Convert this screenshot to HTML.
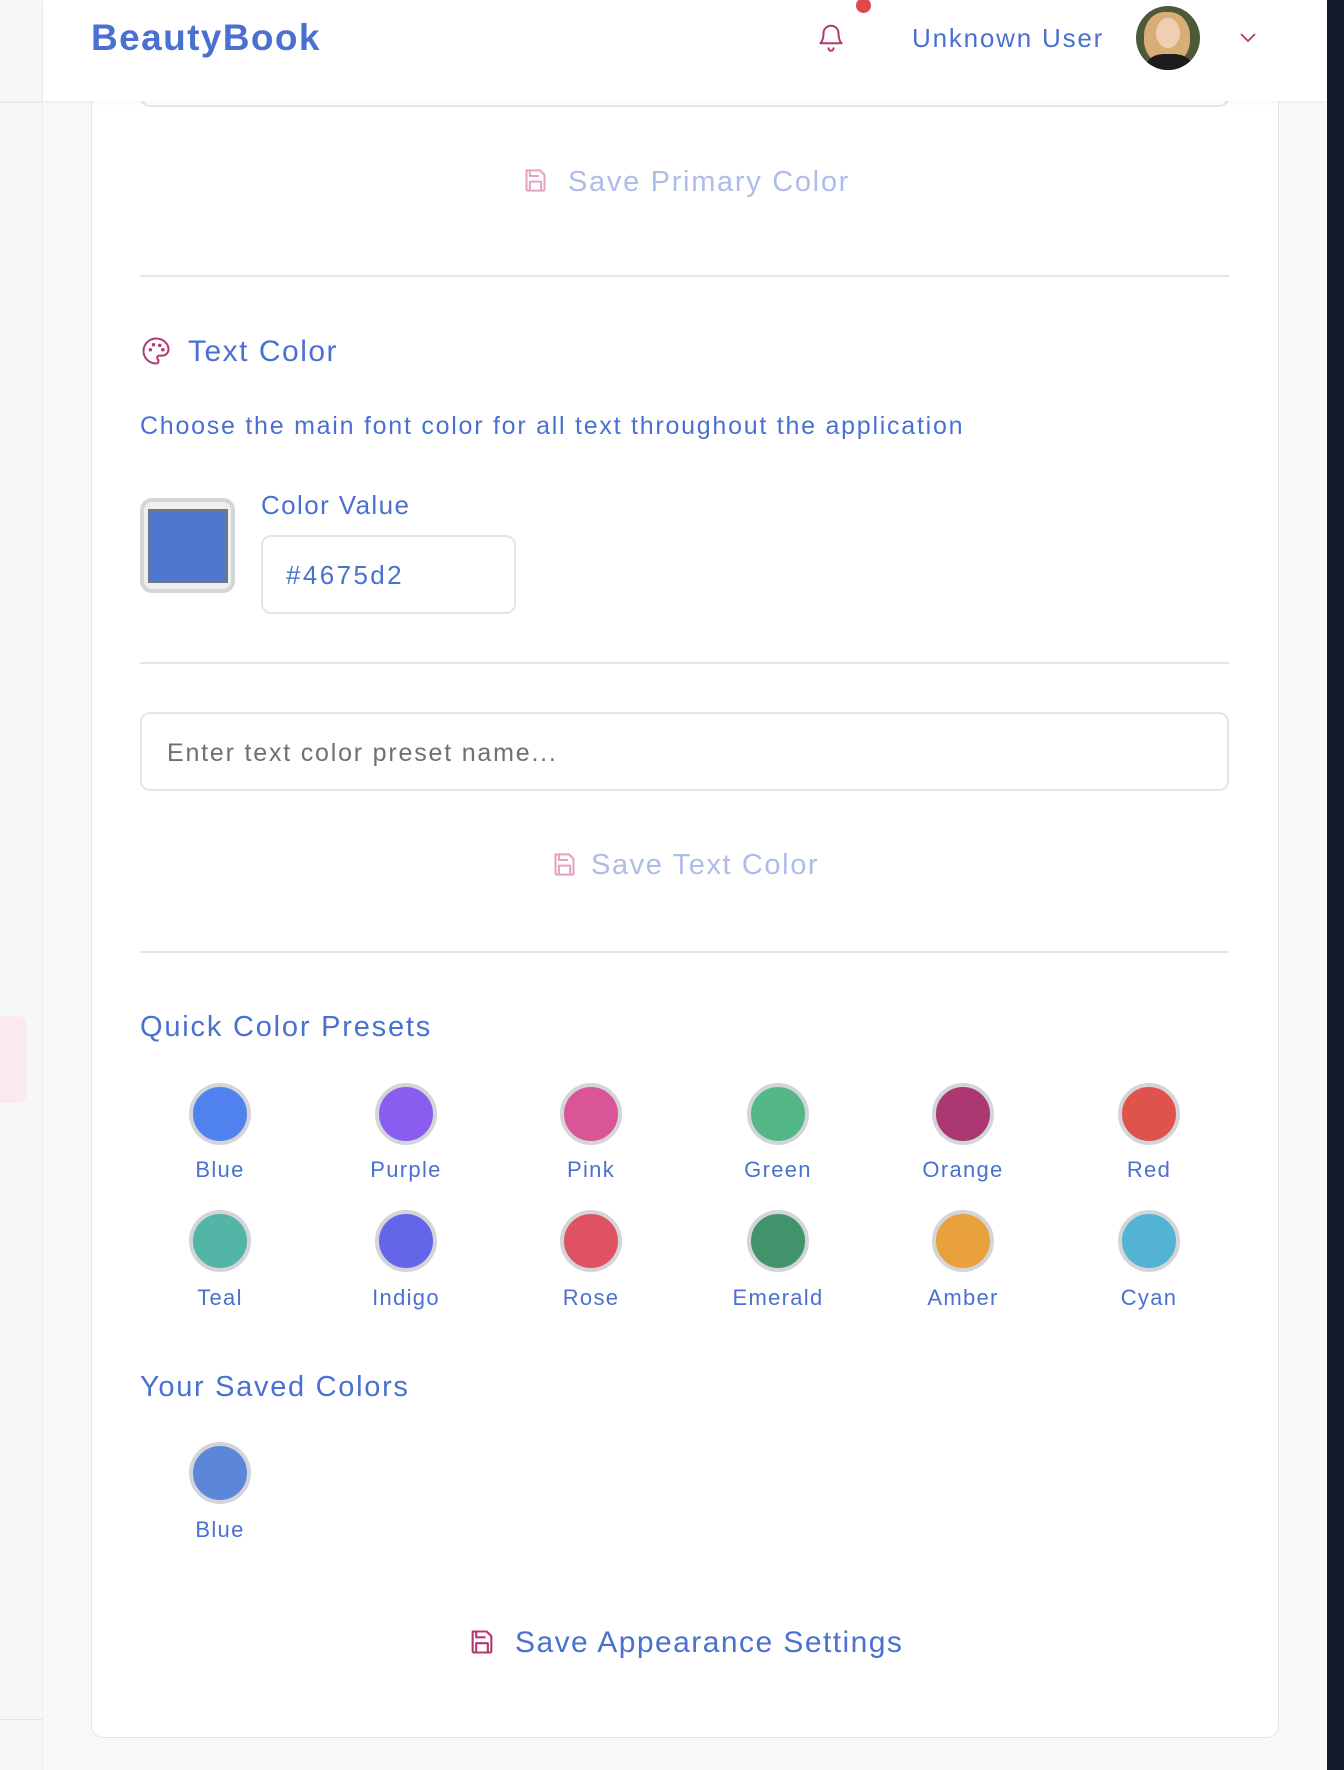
<!DOCTYPE html>
<html><head><meta charset="utf-8"><style>
*{box-sizing:border-box;margin:0;padding:0}
body{width:1344px;height:1770px;background:#f7f8fa;font-family:"Liberation Sans",sans-serif;color:#4a70d0;position:relative;overflow:hidden}
.abs{position:absolute}
.side{left:0;top:0;width:43px;height:1770px;background:#f6f7f9;border-right:1px solid #eceef1}
.dark{left:1327px;top:0;width:17px;height:1770px;background:#131a2a}
.card{left:91px;top:60px;width:1188px;height:1678px;background:#fff;border:1px solid #e3e5e8;border-radius:12px}
.hdr{left:43px;top:0;width:1284px;height:101px;background:#fff;box-shadow:0 2px 4px rgba(0,0,0,.04)}
.hr{left:140px;width:1089px;height:2px;background:#e4e5e7}
.t{white-space:nowrap}
.circ{width:62px;height:62px;border-radius:50%;border:4px solid #d3d5d9}
.lbl{font-size:22px;width:180px;text-align:center;color:#4a70d0;letter-spacing:1.3px}
</style></head><body>
<div class="abs side"></div>
<div class="abs" style="left:0;top:1016px;width:26px;height:87px;background:#fbe9f1;border-radius:0 8px 8px 0"></div>
<div class="abs" style="left:0;top:1719px;width:43px;height:1px;background:#e4e5e7"></div>
<div class="abs dark"></div>
<div class="abs card"></div>
<div class="abs" style="left:140px;top:40px;width:1089px;height:67px;border:2px solid #e4e5e7;border-radius:10px"></div>
<div class="abs hdr"></div>
<div class="abs" style="left:0;top:101px;width:43px;height:2px;background:#e9eaec"></div>
<div class="abs t" style="left:91px;top:17px;font-size:37px;font-weight:bold;color:#4a70d0;letter-spacing:1.4px">BeautyBook</div>
<svg class="abs" style="left:816px;top:20px" width="30" height="34" viewBox="0 0 24 26" fill="none" stroke="#b03a70" stroke-width="1.6" stroke-linecap="round" stroke-linejoin="round"><path d="M6 10a6 6 0 0 1 12 0c0 6 2.5 8 2.5 8h-17S6 16 6 10"/><path d="M10 22a2 2 0 0 0 4 0"/></svg>
<div class="abs" style="left:856px;top:-2px;width:15px;height:15px;border-radius:50%;background:#e0484a"></div>
<div class="abs t" style="left:912px;top:23px;font-size:26px;letter-spacing:1.8px">Unknown User</div>
<div class="abs" style="left:1136px;top:6px;width:64px;height:64px;border-radius:50%;overflow:hidden;background:#4c5a3a">
<div class="abs" style="left:8px;top:6px;width:46px;height:52px;border-radius:45%;background:#d8ad78"></div>
<div class="abs" style="left:20px;top:12px;width:24px;height:30px;border-radius:50%;background:#efcfb2"></div>
<div class="abs" style="left:10px;top:48px;width:46px;height:30px;border-radius:40%;background:#1c1c1c"></div>
</div>
<svg class="abs" style="left:1239px;top:31px" width="18" height="12" viewBox="0 0 18 12" fill="none" stroke="#b03a70" stroke-width="1.8"><path d="M2 3l7 7 7-7"/></svg>

<svg class="abs" style="left:522px;top:167px" width="27" height="27" viewBox="0 0 24 24" fill="none" stroke="#e2a3c0" stroke-width="1.8" stroke-linejoin="round"><path d="M4 3h12l4 4v13a1 1 0 0 1-1 1H5a1 1 0 0 1-1-1V4a1 1 0 0 1 1-1z"/><path d="M7 21v-8h10v8M7 3v5h8"/></svg>
<div class="abs t" style="left:568px;top:166px;font-size:29px;color:#aebce9;letter-spacing:1.7px">Save Primary Color</div>
<div class="abs hr" style="top:275px"></div>

<svg class="abs" style="left:141px;top:336px" width="30" height="30" viewBox="0 0 24 24" fill="none" stroke="#b03a70" stroke-width="1.6" stroke-linecap="round"><path d="M12 2a10 10 0 0 0 0 20c1.5 0 2-1 2-2 0-.6-.3-1-.6-1.4-.3-.4-.5-.8-.5-1.3 0-1 .8-1.6 1.8-1.6H17a5 5 0 0 0 5-5C22 6 17.5 2 12 2z"/><circle cx="7.5" cy="11" r=".6" fill="#b03a70"/><circle cx="10" cy="7" r=".6" fill="#b03a70"/><circle cx="15" cy="7.5" r=".6" fill="#b03a70"/><circle cx="17.5" cy="11" r=".6" fill="#b03a70"/></svg>
<div class="abs t" style="left:188px;top:335px;font-size:30px;letter-spacing:1.5px">Text Color</div>
<div class="abs t" style="left:140px;top:412px;font-size:25px;letter-spacing:1.75px">Choose the main font color for all text throughout the application</div>
<div class="abs" style="left:140px;top:498px;width:95px;height:95px;border:4px solid #d3d5d9;border-radius:12px;background:#eeeff1"></div>
<div class="abs" style="left:148px;top:509px;width:80px;height:74px;background:#5077cf;border:2px solid #777"></div>
<div class="abs t" style="left:261px;top:490px;font-size:26px;letter-spacing:1.4px">Color Value</div>
<div class="abs" style="left:261px;top:535px;width:255px;height:79px;border:2px solid #e4e5e7;border-radius:10px"></div>
<div class="abs t" style="left:286px;top:560px;font-size:26px;letter-spacing:2.4px">#4675d2</div>
<div class="abs hr" style="top:662px"></div>

<div class="abs" style="left:140px;top:712px;width:1089px;height:79px;border:2px solid #e4e5e7;border-radius:10px"></div>
<div class="abs t" style="left:167px;top:739px;font-size:25px;color:#6f6f75;letter-spacing:1.8px">Enter text color preset name...</div>
<svg class="abs" style="left:551px;top:851px" width="27" height="27" viewBox="0 0 24 24" fill="none" stroke="#e2a3c0" stroke-width="1.8" stroke-linejoin="round"><path d="M4 3h12l4 4v13a1 1 0 0 1-1 1H5a1 1 0 0 1-1-1V4a1 1 0 0 1 1-1z"/><path d="M7 21v-8h10v8M7 3v5h8"/></svg>
<div class="abs t" style="left:591px;top:849px;font-size:29px;color:#aebce9;letter-spacing:1.6px">Save Text Color</div>
<div class="abs hr" style="top:951px"></div>

<div class="abs t" style="left:140px;top:1011px;font-size:29px;letter-spacing:1.8px">Quick Color Presets</div>

<div class="abs circ" style="left:189px;top:1083px;background:#4f82ee"></div>
<div class="abs circ" style="left:375px;top:1083px;background:#8a5cef"></div>
<div class="abs circ" style="left:560px;top:1083px;background:#da5597"></div>
<div class="abs circ" style="left:747px;top:1083px;background:#53b786"></div>
<div class="abs circ" style="left:932px;top:1083px;background:#ac3872"></div>
<div class="abs circ" style="left:1118px;top:1083px;background:#df534c"></div>
<div class="abs lbl" style="left:130px;top:1157px">Blue</div>
<div class="abs lbl" style="left:316px;top:1157px">Purple</div>
<div class="abs lbl" style="left:501px;top:1157px">Pink</div>
<div class="abs lbl" style="left:688px;top:1157px">Green</div>
<div class="abs lbl" style="left:873px;top:1157px">Orange</div>
<div class="abs lbl" style="left:1059px;top:1157px">Red</div>

<div class="abs circ" style="left:189px;top:1210px;background:#53b5a5"></div>
<div class="abs circ" style="left:375px;top:1210px;background:#6366e8"></div>
<div class="abs circ" style="left:560px;top:1210px;background:#df5264"></div>
<div class="abs circ" style="left:747px;top:1210px;background:#41936b"></div>
<div class="abs circ" style="left:932px;top:1210px;background:#e9a13b"></div>
<div class="abs circ" style="left:1118px;top:1210px;background:#53b3d3"></div>
<div class="abs lbl" style="left:130px;top:1285px">Teal</div>
<div class="abs lbl" style="left:316px;top:1285px">Indigo</div>
<div class="abs lbl" style="left:501px;top:1285px">Rose</div>
<div class="abs lbl" style="left:688px;top:1285px">Emerald</div>
<div class="abs lbl" style="left:873px;top:1285px">Amber</div>
<div class="abs lbl" style="left:1059px;top:1285px">Cyan</div>

<div class="abs t" style="left:140px;top:1371px;font-size:29px;letter-spacing:1.7px">Your Saved Colors</div>
<div class="abs circ" style="left:189px;top:1442px;background:#5c86d8"></div>
<div class="abs lbl" style="left:130px;top:1517px">Blue</div>

<svg class="abs" style="left:468px;top:1628px" width="28" height="28" viewBox="0 0 24 24" fill="none" stroke="#b03a70" stroke-width="1.8" stroke-linejoin="round"><path d="M4 3h12l4 4v13a1 1 0 0 1-1 1H5a1 1 0 0 1-1-1V4a1 1 0 0 1 1-1z"/><path d="M7 21v-8h10v8M7 3v5h8"/></svg>
<div class="abs t" style="left:515px;top:1626px;font-size:30px;letter-spacing:1.45px">Save Appearance Settings</div>
</body></html>
